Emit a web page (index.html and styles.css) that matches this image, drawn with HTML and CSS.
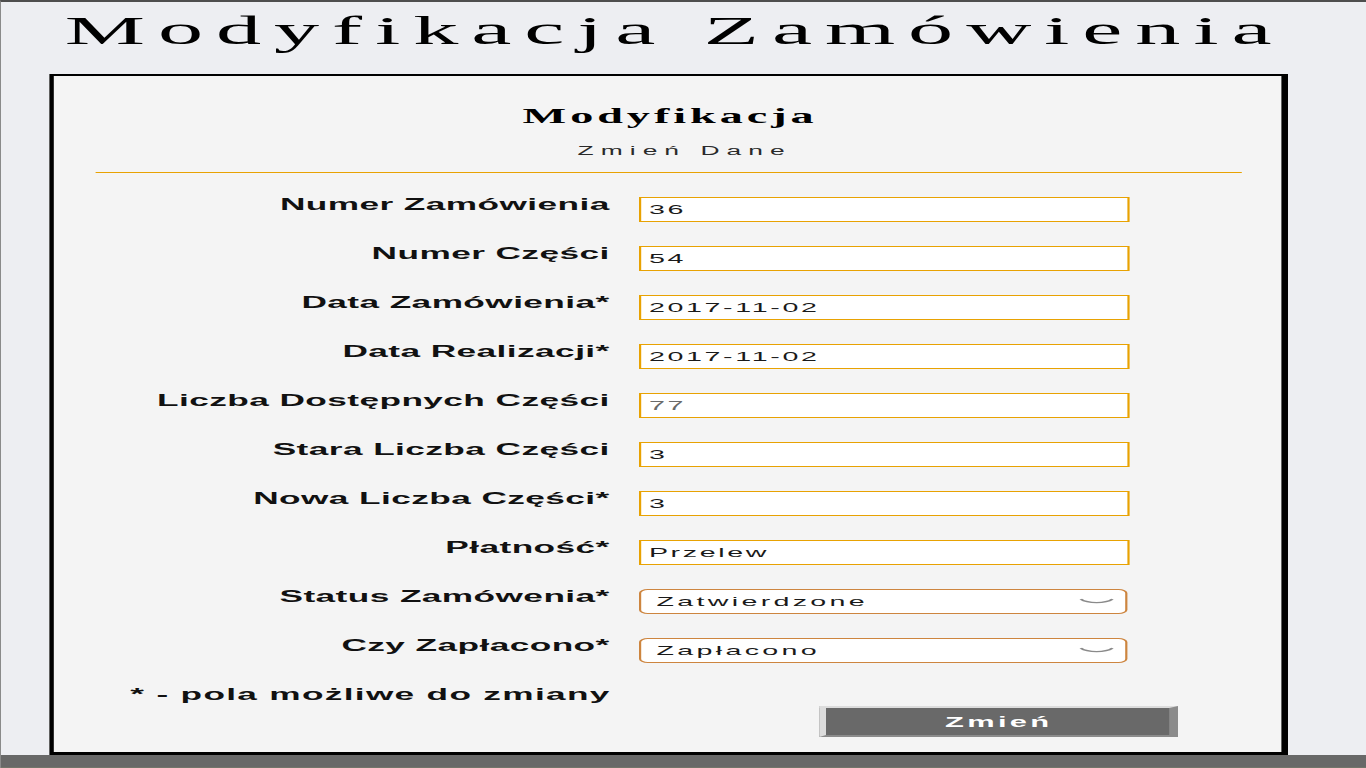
FILE: index.html
```html
<!DOCTYPE html>
<html lang="pl">
<head>
<meta charset="utf-8">
<title>Modyfikacja Zamówienia</title>
<link rel="stylesheet" href="styles.css">
</head>
<body>
<div class="screen">
  <div class="page">
    <h1 class="page-title">Modyfikacja Zamówienia</h1>
    <form class="card">
      <h2 class="card-title">Modyfikacja</h2>
      <p class="card-subtitle">Zmień Dane</p>
      <hr class="divider">
      <div class="fields">
        <label class="field-label" for="f1">Numer Zamówienia</label>
        <input class="field-input" id="f1" value="36" readonly>
        <label class="field-label" for="f2">Numer Części</label>
        <input class="field-input" id="f2" value="54" readonly>
        <label class="field-label" for="f3">Data Zamówienia*</label>
        <input class="field-input" id="f3" value="2017-11-02">
        <label class="field-label" for="f4">Data Realizacji*</label>
        <input class="field-input" id="f4" value="2017-11-02">
        <label class="field-label" for="f5">Liczba Dostępnych Części</label>
        <input class="field-input field-input--muted" id="f5" value="77" readonly>
        <label class="field-label" for="f6">Stara Liczba Części</label>
        <input class="field-input" id="f6" value="3" readonly>
        <label class="field-label" for="f7">Nowa Liczba Części*</label>
        <input class="field-input" id="f7" value="3">
        <label class="field-label" for="f8">Płatność*</label>
        <input class="field-input" id="f8" value="Przelew">
        <label class="field-label" for="f9">Status Zamówenia*</label>
        <div class="select-wrap">
          <select class="field-select" id="f9">
            <option>Zatwierdzone</option>
          </select>
          <svg class="chevron" viewBox="0 0 16 7" aria-hidden="true"><path d="M0.8 1.2 C4 5.8 12 5.8 15.2 1.2"/></svg>
        </div>
        <label class="field-label" for="f10">Czy Zapłacono*</label>
        <div class="select-wrap">
          <select class="field-select" id="f10">
            <option>Zapłacono</option>
          </select>
          <svg class="chevron" viewBox="0 0 16 7" aria-hidden="true"><path d="M0.8 1.2 C4 5.8 12 5.8 15.2 1.2"/></svg>
        </div>
      </div>
      <div class="form-foot">
        <p class="note">* - pola możliwe do zmiany</p>
        <button class="submit" type="submit">Zmień</button>
      </div>
    </form>
  </div>
</div>
<div class="taskbar"></div>
</body>
</html>
```
FILE: styles.css
```css
html, body {
  margin: 0;
  padding: 0;
}

html {
  background: #edeef2;
}

body {
  box-sizing: border-box;
  height: 768px;
  overflow: hidden;
  border-top: 2px solid #4e4e4e;
  border-left: 1px solid #8a8a8a;
  display: flex;
  flex-direction: column;
  font-family: "Liberation Sans", Arial, sans-serif;
}

/* The whole UI is drawn horizontally stretched */
.screen {
  flex: none;
  width: 620.5px;
  transform: scaleX(2.2);
  transform-origin: 0 0;
}

.page {
  margin-left: 21.5px;
  width: 563.5px;
}

.page-title {
  margin: 3px 0 19px;
  padding-left: 5.9px;
  font: 400 41px/50px "Liberation Serif", "Times New Roman", serif;
  letter-spacing: 5.9px;
  text-align: center;
  color: #000;
}

.card {
  background: #f4f4f4;
  border-style: solid;
  border-color: #000;
  border-width: 2px 3px 3px 2px;
  padding: 28px 18px 15px 19px;
}

.card-title {
  margin: 0;
  padding-left: 1.8px;
  font: 700 21px/24px "Liberation Serif", "Times New Roman", serif;
  letter-spacing: 1.8px;
  text-align: center;
  color: #000;
}

.card-subtitle {
  margin: 16px 0 0;
  padding-left: 15px;
  font: 400 12px/14px "Liberation Sans", Arial, sans-serif;
  letter-spacing: 3.2px;
  text-align: center;
  color: #2a2a2a;
}

.divider {
  margin: 14px 0 0;
  border: 0;
  height: 1px;
  background: #e8a202;
}

.fields,
.form-foot {
  display: grid;
  grid-template-columns: 234px 223px;
  column-gap: 13.5px;
}

.fields {
  margin-top: 24px;
  row-gap: 24px;
  align-items: start;
}

.field-label {
  font: 700 16px/15px "Liberation Sans", Arial, sans-serif;
  letter-spacing: 0.2px;
  margin-right: -0.2px;
  text-align: right;
  color: #111;
}

.field-input {
  box-sizing: border-box;
  display: block;
  width: 100%;
  height: 25px;
  margin: 0;
  padding: 0 3.5px;
  border: 1px solid #e8a202;
  background: #fff;
  font: 400 13px "Liberation Sans", Arial, sans-serif;
  letter-spacing: 1.2px;
  color: #1a1a1a;
  outline: none;
}

.field-input--muted {
  color: #6a6a6a;
}

.select-wrap {
  position: relative;
  width: 222px;
}

.field-select {
  appearance: none;
  -webkit-appearance: none;
  box-sizing: border-box;
  display: block;
  width: 100%;
  height: 25px;
  margin: 0;
  padding: 0 24px 0 7px;
  border: 1px solid #cd853f;
  border-radius: 4px;
  background: #fff;
  font: 400 13px "Liberation Sans", Arial, sans-serif;
  letter-spacing: 1.5px;
  color: #1a1a1a;
  outline: none;
}

.chevron {
  position: absolute;
  right: 6px;
  top: 9px;
  width: 16px;
  height: 7px;
  pointer-events: none;
  fill: none;
  stroke: #8a8a8a;
  stroke-width: 1.4;
}

.form-foot {
  margin-top: 24px;
  row-gap: 4px;
}

.note {
  grid-column: 1;
  grid-row: 1;
  margin: 0 -0.6px 0 0;
  font: 700 16px/15px "Liberation Sans", Arial, sans-serif;
  letter-spacing: 0.6px;
  text-align: right;
  color: #111;
}

.submit {
  grid-column: 2;
  grid-row: 2;
  box-sizing: border-box;
  width: 162.5px;
  height: 31px;
  margin-left: 82px;
  padding: 0 0 0 1.5px;
  background: #696969;
  border-style: solid;
  border-width: 2px 4px 2px 3px;
  border-color: #dcdcdc #8b8b8b #8b8b8b #dcdcdc;
  color: #fff;
  font: 700 14px "Liberation Sans", Arial, sans-serif;
  letter-spacing: 1.5px;
}

.taskbar {
  flex: none;
  margin-top: auto;
  height: 13px;
  background: #686868;
  box-shadow: inset 0 -1px 0 #72756a;
}
```
